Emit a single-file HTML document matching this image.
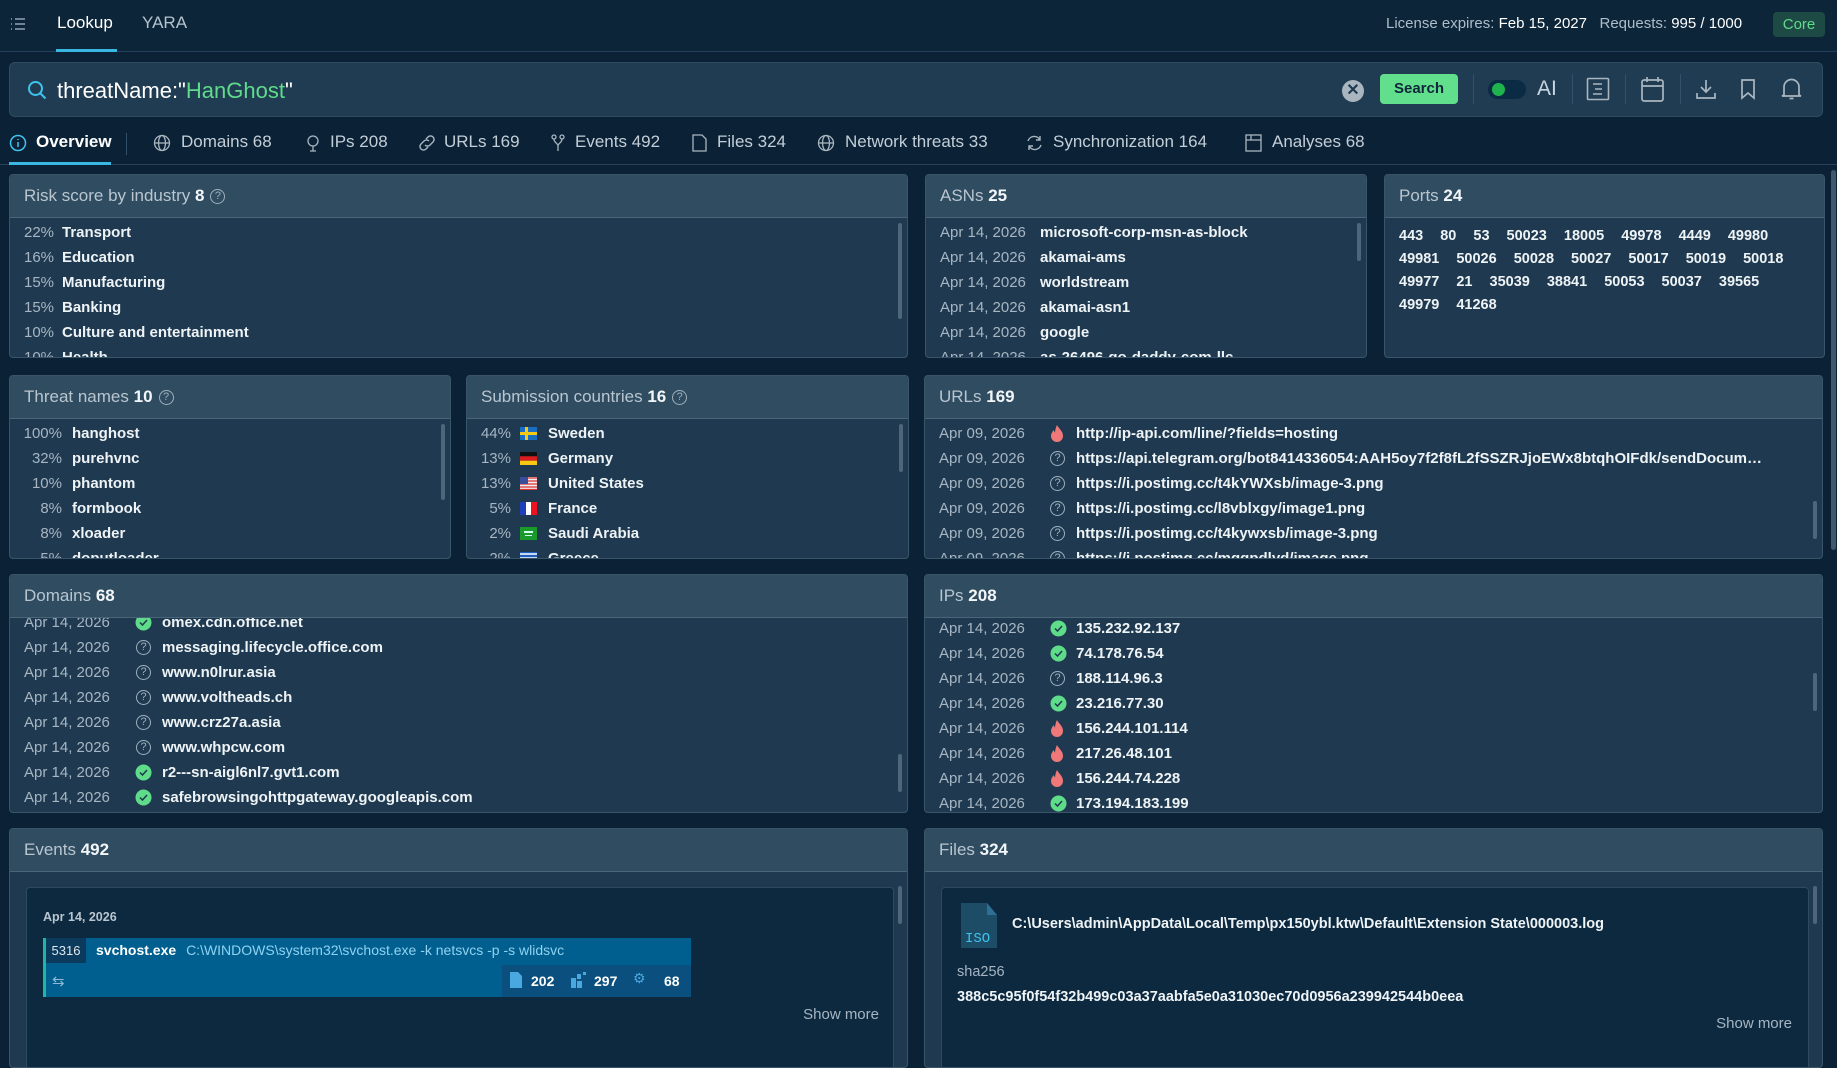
<!DOCTYPE html>
<html><head><meta charset="utf-8">
<style>
*{box-sizing:border-box;margin:0;padding:0}
body{width:1837px;height:1040px;overflow:hidden;background:#0b2236;font-family:"Liberation Sans",sans-serif;color:#e6edf2;position:relative;font-size:15px}
.abs{position:absolute}
.nav{left:0;top:0;width:1837px;height:52px;background:#0c2539;border-bottom:1px solid #24405a}
.g{color:#aebdc9}
.w{color:#eef3f6;font-weight:bold}
.panel{position:absolute;background:#1f3a50;border:1px solid #3a5569;border-radius:4px;overflow:hidden}
.ph{height:43px;background:#2f4c61;border-bottom:1px solid #4a6577;padding:0 14px;line-height:42px;font-size:17px;color:#b9c6d0;white-space:nowrap}
.ph b{color:#f2f6f8}
.pb{position:absolute;left:0;right:0;top:43px;bottom:0;overflow:hidden}
.row{height:25px;line-height:25px;white-space:nowrap;position:relative}
.row .d{position:absolute;left:14px;color:#a7b6c2}
.row .ic{position:absolute;top:5px}
.row .v{position:absolute;font-weight:bold;color:#eef3f6}
.row .p{position:absolute;text-align:right;color:#a7b6c2}
.sb{position:absolute;width:4px;background:#4d6679;border-radius:2px}
.tab{position:absolute;top:132px;font-size:17px;color:#c3ced7;white-space:nowrap}
.tabi{position:absolute;top:134px}
.q{display:inline-block;width:15px;height:15px;border:1.3px solid #9fb0bd;border-radius:50%;font-size:11px;line-height:13px;text-align:center;color:#9fb0bd;vertical-align:middle;margin-left:6px;font-weight:normal}
</style></head><body>

<!-- NAV -->
<div class="abs nav"></div>
<svg class="abs" style="left:10px;top:17px" width="16" height="14" viewBox="0 0 16 14" fill="none" stroke="#8fa3b3" stroke-width="1.5"><path d="M1 2h1M5 2h10M1 7h1M5 7h10M1 12h1M5 12h10"/></svg>
<div class="abs" style="left:57px;top:13px;font-size:17px;color:#fff">Lookup</div>
<div class="abs" style="left:56px;top:49px;width:61px;height:3px;background:#3ab8e2"></div>
<div class="abs" style="left:142px;top:13px;font-size:17px;color:#b5c3ce">YARA</div>
<div class="abs" style="left:1386px;top:15px;font-size:15px;white-space:nowrap"><span class="g">License expires:</span> <span style="color:#fff">Feb 15, 2027</span> &nbsp; <span class="g">Requests:</span> <span style="color:#fff">995 / 1000</span></div>
<div class="abs" style="left:1773px;top:12px;width:52px;height:25px;background:#1d4a45;border-radius:4px;color:#5fdc8a;font-size:15px;line-height:25px;text-align:center">Core</div>

<!-- SEARCH -->
<div class="abs" style="left:9px;top:62px;width:1814px;height:55px;background:#203c52;border:1px solid #2f4b60;border-radius:6px"></div>
<svg class="abs" style="left:27px;top:80px" width="20" height="20" viewBox="0 0 20 20" fill="none" stroke="#3fc2ee" stroke-width="2"><circle cx="8.5" cy="8.5" r="6.5"/><path d="M13.5 13.5l5 5"/></svg>
<div class="abs" style="left:57px;top:78px;font-size:22px;color:#fff;white-space:nowrap">threatName:"<span style="color:#5fdc8a">HanGhost</span>"</div>
<div class="abs" style="left:1342px;top:80px;width:22px;height:22px;border-radius:50%;background:#a9b6c0;color:#1f3a50;font-size:16px;line-height:22px;text-align:center;font-weight:bold">✕</div>
<div class="abs" style="left:1380px;top:74px;width:78px;height:30px;background:#62df8c;border-radius:4px;color:#10263a;font-size:15px;font-weight:bold;line-height:30px;text-align:center">Search</div>
<div class="abs" style="left:1473px;top:74px;width:1px;height:30px;background:#33506a"></div>
<div class="abs" style="left:1488px;top:80px;width:38px;height:19px;background:#0b2a44;border-radius:10px"></div>
<div class="abs" style="left:1492px;top:83px;width:13px;height:13px;background:#1fb34e;border-radius:50%"></div>
<div class="abs" style="left:1537px;top:77px;font-size:21px;color:#c9d5de">AI</div>
<div class="abs" style="left:1572px;top:74px;width:1px;height:30px;background:#33506a"></div>
<svg class="abs" style="left:1586px;top:77px" width="24" height="24" viewBox="0 0 24 24" fill="none" stroke="#a9b6c0" stroke-width="1.6"><rect x="1.5" y="1.5" width="21" height="21" rx="1"/><path d="M7 7h9M9 12h7M7 17h9"/></svg>
<div class="abs" style="left:1625px;top:74px;width:1px;height:30px;background:#33506a"></div>
<svg class="abs" style="left:1640px;top:76px" width="25" height="27" viewBox="0 0 25 27" fill="none" stroke="#a9b6c0" stroke-width="1.7"><rect x="2" y="4" width="21" height="21" rx="2"/><path d="M2 10h21M7 1v5M18 1v5"/></svg>
<div class="abs" style="left:1680px;top:74px;width:1px;height:30px;background:#33506a"></div>
<svg class="abs" style="left:1695px;top:78px" width="22" height="22" viewBox="0 0 22 22" fill="none" stroke="#a9b6c0" stroke-width="1.7"><path d="M11 2v12M6 9l5 5 5-5M2 15v5h18v-5"/></svg>
<svg class="abs" style="left:1740px;top:78px" width="16" height="22" viewBox="0 0 16 22" fill="none" stroke="#a9b6c0" stroke-width="1.7"><path d="M2 2h12v18l-6-5-6 5z"/></svg>
<svg class="abs" style="left:1781px;top:77px" width="21" height="24" viewBox="0 0 21 24" fill="none" stroke="#a9b6c0" stroke-width="1.7"><path d="M3 18V10a7.5 7.5 0 0 1 15 0v8l2 1H1zM8.5 21.5h4"/></svg>

<!-- TABS -->
<div class="abs" style="left:0;top:164px;width:1837px;height:1px;background:#27425a"></div>
<svg class="abs tabi" style="left:9px;top:134px" width="18" height="18" viewBox="0 0 18 18" fill="none" stroke="#3fc2ee" stroke-width="1.5"><circle cx="9" cy="9" r="7.5"/><path d="M9 8v5M9 5v1"/></svg>
<div class="tab" style="left:36px;color:#fff;font-weight:bold">Overview</div>
<div class="abs" style="left:9px;top:162px;width:102px;height:3px;background:#3ab8e2"></div>
<div class="abs" style="left:126px;top:133px;width:1px;height:22px;background:#33506a"></div>
<svg class="abs tabi" style="left:153px" width="18" height="18" viewBox="0 0 18 18" fill="none" stroke="#a9b6c0" stroke-width="1.3"><circle cx="9" cy="9" r="7.5"/><ellipse cx="9" cy="9" rx="3.5" ry="7.5"/><path d="M1.5 9h15"/></svg>
<div class="tab" style="left:181px">Domains 68</div>
<svg class="abs tabi" style="left:305px" width="16" height="18" viewBox="0 0 16 18" fill="none" stroke="#a9b6c0" stroke-width="1.3"><circle cx="8" cy="7" r="5"/><path d="M8 12v5M5 17h6"/></svg>
<div class="tab" style="left:330px">IPs 208</div>
<svg class="abs tabi" style="left:418px" width="18" height="18" viewBox="0 0 18 18" fill="none" stroke="#a9b6c0" stroke-width="1.4"><path d="M8 5l2-2a3.5 3.5 0 0 1 5 5l-3 3a3.5 3.5 0 0 1-5 0M10 13l-2 2a3.5 3.5 0 0 1-5-5l3-3a3.5 3.5 0 0 1 5 0"/></svg>
<div class="tab" style="left:444px">URLs 169</div>
<svg class="abs tabi" style="left:550px" width="16" height="18" viewBox="0 0 16 18" fill="none" stroke="#a9b6c0" stroke-width="1.3"><circle cx="4" cy="3" r="2"/><circle cx="12" cy="3" r="2"/><path d="M4 5c0 4 4 4 4 7M12 5c0 4-4 4-4 7v5"/></svg>
<div class="tab" style="left:575px">Events 492</div>
<svg class="abs tabi" style="left:692px" width="15" height="18" viewBox="0 0 15 18" fill="none" stroke="#a9b6c0" stroke-width="1.3"><path d="M1 1h9l4 4v12H1z"/></svg>
<div class="tab" style="left:717px">Files 324</div>
<svg class="abs tabi" style="left:817px" width="18" height="18" viewBox="0 0 18 18" fill="none" stroke="#a9b6c0" stroke-width="1.3"><circle cx="9" cy="9" r="7.5"/><ellipse cx="9" cy="9" rx="3.5" ry="7.5"/><path d="M1.5 9h15"/></svg>
<div class="tab" style="left:845px">Network threats 33</div>
<svg class="abs tabi" style="left:1026px" width="17" height="18" viewBox="0 0 17 18" fill="none" stroke="#a9b6c0" stroke-width="1.4"><path d="M14 6a6.5 6.5 0 0 0-12 1M3 12a6.5 6.5 0 0 0 12-1M14 2v4h-4M3 16v-4h4"/></svg>
<div class="tab" style="left:1053px">Synchronization 164</div>
<svg class="abs tabi" style="left:1245px" width="17" height="18" viewBox="0 0 17 18" fill="none" stroke="#a9b6c0" stroke-width="1.3"><rect x="1" y="1" width="15" height="16"/><path d="M1 6h15M6 1v5"/></svg>
<div class="tab" style="left:1272px">Analyses 68</div>

<!-- page scrollbar -->
<div class="abs" style="left:1831px;top:170px;width:5px;height:380px;background:#3f586c;border-radius:3px"></div>

<!-- RISK -->
<div class="panel" style="left:9px;top:174px;width:899px;height:184px">
<div class="ph">Risk score by industry <b>8</b><span class="q">?</span></div>
<div class="pb" style="padding-top:2px">
<div class="row"><span class="d">22%</span><span class="v" style="left:52px">Transport</span></div>
<div class="row"><span class="d">16%</span><span class="v" style="left:52px">Education</span></div>
<div class="row"><span class="d">15%</span><span class="v" style="left:52px">Manufacturing</span></div>
<div class="row"><span class="d">15%</span><span class="v" style="left:52px">Banking</span></div>
<div class="row"><span class="d">10%</span><span class="v" style="left:52px">Culture and entertainment</span></div>
<div class="row"><span class="d">10%</span><span class="v" style="left:52px">Health</span></div>
<div class="sb" style="right:5px;top:5px;height:96px"></div>
</div></div>

<!-- ASNs -->
<div class="panel" style="left:925px;top:174px;width:442px;height:184px">
<div class="ph">ASNs <b>25</b></div>
<div class="pb" style="padding-top:2px">
<div class="row"><span class="d">Apr 14, 2026</span><span class="v" style="left:114px">microsoft-corp-msn-as-block</span></div>
<div class="row"><span class="d">Apr 14, 2026</span><span class="v" style="left:114px">akamai-ams</span></div>
<div class="row"><span class="d">Apr 14, 2026</span><span class="v" style="left:114px">worldstream</span></div>
<div class="row"><span class="d">Apr 14, 2026</span><span class="v" style="left:114px">akamai-asn1</span></div>
<div class="row"><span class="d">Apr 14, 2026</span><span class="v" style="left:114px">google</span></div>
<div class="row"><span class="d">Apr 14, 2026</span><span class="v" style="left:114px">as-26496-go-daddy-com-llc</span></div>
<div class="sb" style="right:5px;top:5px;height:38px"></div>
</div></div>

<!-- PORTS -->
<div class="panel" style="left:1384px;top:174px;width:441px;height:184px">
<div class="ph">Ports <b>24</b></div>
<div class="pb" style="padding:7px 14px;font-weight:bold;font-size:14.5px;line-height:23px;color:#eef3f6;word-spacing:13px">443 80 53 50023 18005 49978 4449 49980<br>49981 50026 50028 50027 50017 50019 50018<br>49977 21 35039 38841 50053 50037 39565<br>49979 41268</div>
</div>

<!-- THREAT NAMES -->
<div class="panel" style="left:9px;top:375px;width:442px;height:184px">
<div class="ph">Threat names <b>10</b><span class="q">?</span></div>
<div class="pb" style="padding-top:2px">
<div class="row"><span class="p" style="left:0;width:52px">100%</span><span class="v" style="left:62px">hanghost</span></div>
<div class="row"><span class="p" style="left:0;width:52px">32%</span><span class="v" style="left:62px">purehvnc</span></div>
<div class="row"><span class="p" style="left:0;width:52px">10%</span><span class="v" style="left:62px">phantom</span></div>
<div class="row"><span class="p" style="left:0;width:52px">8%</span><span class="v" style="left:62px">formbook</span></div>
<div class="row"><span class="p" style="left:0;width:52px">8%</span><span class="v" style="left:62px">xloader</span></div>
<div class="row"><span class="p" style="left:0;width:52px">5%</span><span class="v" style="left:62px">doputloader</span></div>
<div class="sb" style="right:5px;top:5px;height:76px"></div>
</div></div>

<!-- SUBMISSION -->
<div class="panel" style="left:466px;top:375px;width:443px;height:184px">
<div class="ph">Submission countries <b>16</b><span class="q">?</span></div>
<div class="pb" style="padding-top:2px">
<div class="row"><span class="p" style="left:0;width:44px">44%</span><svg class="ic" style="left:53px;top:6px" width="17" height="13"><rect width="17" height="13" fill="#1a6fc0"/><rect x="5" width="3" height="13" fill="#f6c915"/><rect y="5" width="17" height="3" fill="#f6c915"/></svg><span class="v" style="left:81px">Sweden</span></div>
<div class="row"><span class="p" style="left:0;width:44px">13%</span><svg class="ic" style="left:53px;top:6px" width="17" height="13"><rect width="17" height="4.3" fill="#111"/><rect y="4.3" width="17" height="4.4" fill="#dd1d1d"/><rect y="8.7" width="17" height="4.3" fill="#f6c915"/></svg><span class="v" style="left:81px">Germany</span></div>
<div class="row"><span class="p" style="left:0;width:44px">13%</span><svg class="ic" style="left:53px;top:6px" width="17" height="13"><rect width="17" height="13" fill="#eee"/><path d="M0 1h17M0 4h17M0 7h17M0 10h17M0 12.5h17" stroke="#d33" stroke-width="1.2"/><rect width="8" height="7" fill="#3b4e9a"/></svg><span class="v" style="left:81px">United States</span></div>
<div class="row"><span class="p" style="left:0;width:44px">5%</span><svg class="ic" style="left:53px;top:6px" width="17" height="13"><rect width="6" height="13" fill="#1d3fb8"/><rect x="6" width="5" height="13" fill="#fff"/><rect x="11" width="6" height="13" fill="#e12"/></svg><span class="v" style="left:81px">France</span></div>
<div class="row"><span class="p" style="left:0;width:44px">2%</span><svg class="ic" style="left:53px;top:6px" width="17" height="13"><rect width="17" height="13" fill="#1a9a2a"/><rect x="4" y="4" width="9" height="2" fill="#cfe"/><rect x="5" y="8" width="7" height="1" fill="#cfe"/></svg><span class="v" style="left:81px">Saudi Arabia</span></div>
<div class="row"><span class="p" style="left:0;width:44px">2%</span><svg class="ic" style="left:53px;top:6px" width="17" height="13"><rect width="17" height="13" fill="#1f5fc0"/><path d="M0 2h17M0 6h17M0 10h17" stroke="#fff" stroke-width="1.4"/></svg><span class="v" style="left:81px">Greece</span></div>
<div class="sb" style="right:5px;top:5px;height:48px"></div>
</div></div>

<!-- URLs -->
<div class="panel" style="left:924px;top:375px;width:899px;height:184px">
<div class="ph">URLs <b>169</b></div>
<div class="pb" style="padding-top:2px">
<div class="row"><span class="d">Apr 09, 2026</span><svg class="ic" style="left:125px;top:4px" width="14" height="17" viewBox="0 0 14 17"><path d="M7 0C9 4 13 6 13 11a6 6 0 0 1-12 0c0-3 2-4 2-6 1 1 2 2 2 3 0-3 1-6 2-8z" fill="#f07878"/></svg><span class="v" style="left:151px">http://ip-api.com/line/?fields=hosting</span></div>
<div class="row"><span class="d">Apr 09, 2026</span><span class="ic q" style="left:119px;top:5px">?</span><span class="v" style="left:151px">https://api.telegram.org/bot8414336054:AAH5oy7f2f8fL2fSSZRJjoEWx8btqhOIFdk/sendDocum…</span></div>
<div class="row"><span class="d">Apr 09, 2026</span><span class="ic q" style="left:119px;top:5px">?</span><span class="v" style="left:151px">https://i.postimg.cc/t4kYWXsb/image-3.png</span></div>
<div class="row"><span class="d">Apr 09, 2026</span><span class="ic q" style="left:119px;top:5px">?</span><span class="v" style="left:151px">https://i.postimg.cc/l8vblxgy/image1.png</span></div>
<div class="row"><span class="d">Apr 09, 2026</span><span class="ic q" style="left:119px;top:5px">?</span><span class="v" style="left:151px">https://i.postimg.cc/t4kywxsb/image-3.png</span></div>
<div class="row"><span class="d">Apr 09, 2026</span><span class="ic q" style="left:119px;top:5px">?</span><span class="v" style="left:151px">https://i.postimg.cc/mggpdlyd/image.png</span></div>
<div class="sb" style="right:5px;top:82px;height:38px"></div>
</div></div>

<!-- DOMAINS -->
<div class="panel" style="left:9px;top:574px;width:899px;height:239px">
<div class="ph">Domains <b>68</b></div>
<div class="pb"><div style="position:absolute;left:0;right:0;top:-8px">
<div class="row"><span class="d">Apr 14, 2026</span><svg class="ic" style="left:125px;top:4px" width="17" height="17"><circle cx="8.5" cy="8.5" r="8" fill="#5fdc8a"/><path d="M5 8.5l2.5 2.5 4.5-5" fill="none" stroke="#1f3a50" stroke-width="1.5"/></svg><span class="v" style="left:152px">omex.cdn.office.net</span></div>
<div class="row"><span class="d">Apr 14, 2026</span><span class="ic q" style="left:120px">?</span><span class="v" style="left:152px">messaging.lifecycle.office.com</span></div>
<div class="row"><span class="d">Apr 14, 2026</span><span class="ic q" style="left:120px">?</span><span class="v" style="left:152px">www.n0lrur.asia</span></div>
<div class="row"><span class="d">Apr 14, 2026</span><span class="ic q" style="left:120px">?</span><span class="v" style="left:152px">www.voltheads.ch</span></div>
<div class="row"><span class="d">Apr 14, 2026</span><span class="ic q" style="left:120px">?</span><span class="v" style="left:152px">www.crz27a.asia</span></div>
<div class="row"><span class="d">Apr 14, 2026</span><span class="ic q" style="left:120px">?</span><span class="v" style="left:152px">www.whpcw.com</span></div>
<div class="row"><span class="d">Apr 14, 2026</span><svg class="ic" style="left:125px;top:4px" width="17" height="17"><circle cx="8.5" cy="8.5" r="8" fill="#5fdc8a"/><path d="M5 8.5l2.5 2.5 4.5-5" fill="none" stroke="#1f3a50" stroke-width="1.5"/></svg><span class="v" style="left:152px">r2---sn-aigl6nl7.gvt1.com</span></div>
<div class="row"><span class="d">Apr 14, 2026</span><svg class="ic" style="left:125px;top:4px" width="17" height="17"><circle cx="8.5" cy="8.5" r="8" fill="#5fdc8a"/><path d="M5 8.5l2.5 2.5 4.5-5" fill="none" stroke="#1f3a50" stroke-width="1.5"/></svg><span class="v" style="left:152px">safebrowsingohttpgateway.googleapis.com</span></div>
</div><div class="sb" style="right:5px;top:136px;height:38px"></div></div></div>

<!-- IPs -->
<div class="panel" style="left:924px;top:574px;width:899px;height:239px">
<div class="ph">IPs <b>208</b></div>
<div class="pb"><div style="position:absolute;left:0;right:0;top:-2px">
<div class="row"><span class="d">Apr 14, 2026</span><svg class="ic" style="left:125px;top:4px" width="17" height="17"><circle cx="8.5" cy="8.5" r="8" fill="#5fdc8a"/><path d="M5 8.5l2.5 2.5 4.5-5" fill="none" stroke="#1f3a50" stroke-width="1.5"/></svg><span class="v" style="left:151px">135.232.92.137</span></div>
<div class="row"><span class="d">Apr 14, 2026</span><svg class="ic" style="left:125px;top:4px" width="17" height="17"><circle cx="8.5" cy="8.5" r="8" fill="#5fdc8a"/><path d="M5 8.5l2.5 2.5 4.5-5" fill="none" stroke="#1f3a50" stroke-width="1.5"/></svg><span class="v" style="left:151px">74.178.76.54</span></div>
<div class="row"><span class="d">Apr 14, 2026</span><span class="ic q" style="left:119px">?</span><span class="v" style="left:151px">188.114.96.3</span></div>
<div class="row"><span class="d">Apr 14, 2026</span><svg class="ic" style="left:125px;top:4px" width="17" height="17"><circle cx="8.5" cy="8.5" r="8" fill="#5fdc8a"/><path d="M5 8.5l2.5 2.5 4.5-5" fill="none" stroke="#1f3a50" stroke-width="1.5"/></svg><span class="v" style="left:151px">23.216.77.30</span></div>
<div class="row"><span class="d">Apr 14, 2026</span><svg class="ic" style="left:125px;top:4px" width="14" height="17" viewBox="0 0 14 17"><path d="M7 0C9 4 13 6 13 11a6 6 0 0 1-12 0c0-3 2-4 2-6 1 1 2 2 2 3 0-3 1-6 2-8z" fill="#f07878"/></svg><span class="v" style="left:151px">156.244.101.114</span></div>
<div class="row"><span class="d">Apr 14, 2026</span><svg class="ic" style="left:125px;top:4px" width="14" height="17" viewBox="0 0 14 17"><path d="M7 0C9 4 13 6 13 11a6 6 0 0 1-12 0c0-3 2-4 2-6 1 1 2 2 2 3 0-3 1-6 2-8z" fill="#f07878"/></svg><span class="v" style="left:151px">217.26.48.101</span></div>
<div class="row"><span class="d">Apr 14, 2026</span><svg class="ic" style="left:125px;top:4px" width="14" height="17" viewBox="0 0 14 17"><path d="M7 0C9 4 13 6 13 11a6 6 0 0 1-12 0c0-3 2-4 2-6 1 1 2 2 2 3 0-3 1-6 2-8z" fill="#f07878"/></svg><span class="v" style="left:151px">156.244.74.228</span></div>
<div class="row"><span class="d">Apr 14, 2026</span><svg class="ic" style="left:125px;top:4px" width="17" height="17"><circle cx="8.5" cy="8.5" r="8" fill="#5fdc8a"/><path d="M5 8.5l2.5 2.5 4.5-5" fill="none" stroke="#1f3a50" stroke-width="1.5"/></svg><span class="v" style="left:151px">173.194.183.199</span></div>
</div><div class="sb" style="right:5px;top:55px;height:38px"></div></div></div>

<!-- EVENTS -->
<div class="panel" style="left:9px;top:828px;width:899px;height:240px">
<div class="ph">Events <b>492</b></div>
<div class="sb" style="right:5px;top:57px;height:38px"></div>
<div class="abs" style="left:16px;top:58px;width:868px;height:200px;background:#0c2940;border:1px solid #2c4a60;border-radius:4px">
<div class="abs" style="left:16px;top:22px;font-size:12.5px;font-weight:bold;color:#b9c6d0">Apr 14, 2026</div>
<div class="abs" style="left:16px;top:50px;width:648px;height:59px;border-left:3px solid #1fb7a4">
<div class="abs" style="left:0;top:0;width:645px;height:59px;background:#005f8e"></div>
<div class="abs" style="left:0;top:0;width:40px;height:25px;background:#0b3a5c;color:#dfe8ef;font-size:13px;line-height:25px;text-align:center">5316</div>
<div class="abs" style="left:50px;top:4px;font-size:14px;font-weight:bold;color:#fff;white-space:nowrap">svchost.exe <span style="font-weight:normal;color:#8fd2f2;margin-left:6px">C:\WINDOWS\system32\svchost.exe -k netsvcs -p -s wlidsvc</span></div>
<div class="abs" style="left:456px;top:27px;width:189px;height:32px;background:#0a4f7d"></div>
<div class="abs" style="left:6px;top:34px;color:#8fb8d4;font-size:15px">⇆</div>
<svg class="abs" style="left:464px;top:34px" width="12" height="16"><path d="M0 0h8l4 4v12H0z" fill="#4aa8e0"/></svg>
<div class="abs" style="left:485px;top:35px;font-size:14px;font-weight:bold;color:#fff">202</div>
<svg class="abs" style="left:525px;top:34px" width="16" height="16" fill="#4aa8e0"><rect x="0" y="6" width="5" height="10"/><rect x="6" y="9" width="5" height="7"/><rect x="6" y="2" width="4" height="5"/><rect x="12" y="0" width="3" height="3"/></svg>
<div class="abs" style="left:548px;top:35px;font-size:14px;font-weight:bold;color:#fff">297</div>
<div class="abs" style="left:587px;top:32px;font-size:14px;color:#4aa8e0">⚙</div>
<div class="abs" style="left:618px;top:35px;font-size:14px;font-weight:bold;color:#fff">68</div>
</div>
<div class="abs" style="right:14px;top:118px;font-size:15px;color:#a7b6c2">Show more</div>
</div></div>

<!-- FILES -->
<div class="panel" style="left:924px;top:828px;width:899px;height:240px">
<div class="ph">Files <b>324</b></div>
<div class="sb" style="right:5px;top:57px;height:38px"></div>
<div class="abs" style="left:16px;top:58px;width:868px;height:200px;background:#0c2940;border:1px solid #2c4a60;border-radius:4px">
<svg class="abs" style="left:19px;top:15px" width="36" height="45" viewBox="0 0 36 45"><path d="M0 0h26l10 12v33H0z" fill="#1c4c66"/><path d="M26 0v12h10z" fill="#2e7094"/><text x="4" y="39" font-family="Liberation Mono,monospace" font-size="14" fill="#3fc2ee">ISO</text></svg>
<div class="abs" style="left:70px;top:28px;font-size:14.5px;font-weight:bold;color:#eef3f6;white-space:nowrap">C:\Users\admin\AppData\Local\Temp\px150ybl.ktw\Default\Extension State\000003.log</div>
<div class="abs" style="left:15px;top:76px;font-size:14.5px;color:#a7b6c2">sha256</div>
<div class="abs" style="left:15px;top:101px;font-size:14.5px;font-weight:bold;color:#eef3f6">388c5c95f0f54f32b499c03a37aabfa5e0a31030ec70d0956a239942544b0eea</div>
<div class="abs" style="right:16px;top:127px;font-size:15px;color:#a7b6c2">Show more</div>
</div></div>

</body></html>
